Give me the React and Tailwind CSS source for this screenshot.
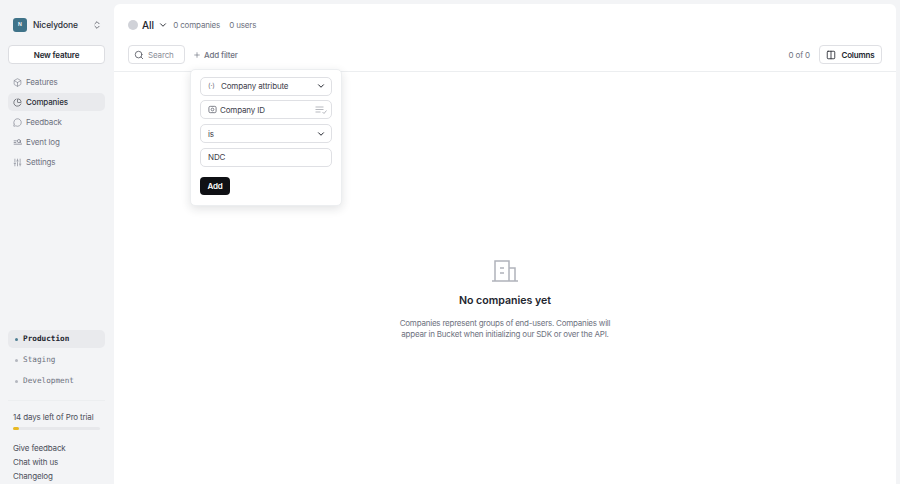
import { ChevronDown, ChevronsUpDown, Search, Plus, Columns2, Box, MessageCircle, SlidersVertical, ChartPie } from 'lucide-react';

const FONT = "font-['Inter','Liberation_Sans',sans-serif]";
const MONO = "font-['DejaVu_Sans_Mono','Liberation_Mono',monospace]";

function EventLogIcon({ className }) {
  return (
    <svg className={className} viewBox="0 0 16 16" fill="none" stroke="currentColor" strokeWidth="1.2" strokeLinecap="round">
      <path d="M2 5h4M2 8h3M2 11h13" />
      <circle cx="10.5" cy="5.5" r="2.8" />
      <path d="M12.5 7.5 14.5 9" />
    </svg>
  );
}

function NavItem({ icon: Icon, label, active }) {
  return (
    <div className={`flex h-[18px] items-center gap-[4px] rounded-[5px] pl-[5px] text-[8px] tracking-[-0.15px] ${active ? 'bg-[#e9eaed] font-medium text-[#2b2e38]' : 'text-[#6e7280]'}`}>
      <Icon className="h-[9px] w-[9px]" strokeWidth={1.5} />
      <span>{label}</span>
    </div>
  );
}

function EnvItem({ label, active }) {
  return (
    <div className={`flex h-[18px] items-center gap-[5px] rounded-[5px] pl-[7px] text-[7.7px] ${MONO} ${active ? 'bg-[#e9eaed] font-bold text-[#22252e]' : 'text-[#6e7280]'}`}>
      <span className={`h-[3px] w-[3px] rounded-full ${active ? 'bg-[#4f7f93]' : 'bg-[#b4b7bf]'}`} />
      <span>{label}</span>
    </div>
  );
}

function Field({ children, right }) {
  return (
    <div className="flex h-[19px] w-[132px] items-center justify-between rounded-[5px] border border-[#dfe0e4] bg-white pl-[7px] pr-[4px] text-[8px] tracking-[-0.15px] text-[#3d404a]">
      <div className="flex items-center gap-[4px]">{children}</div>
      {right}
    </div>
  );
}

const chevron = <ChevronDown className="mr-[1px] h-[10px] w-[10px] text-[#22252e]" strokeWidth={2.4} />;

export default function App() {
  return (
    <div className={`flex h-[484px] w-[900px] overflow-hidden bg-[#f3f4f6] ${FONT}`}>
      {/* SIDEBAR */}
      <aside className="flex w-[114px] shrink-0 flex-col pl-[8px] pr-[9px]">
        <div className="mt-[18px] flex items-center pl-[5px] pr-[3px]">
          <div className="flex h-[14px] w-[14px] items-center justify-center rounded-[3px] bg-[#3f7389] text-[5px] font-semibold text-white">N</div>
          <span className="ml-[6px] flex-1 text-[8.5px] font-medium tracking-[-0.1px] text-[#2b2e38]">Nicelydone</span>
          <ChevronsUpDown className="h-[10px] w-[10px] text-[#555862]" />
        </div>
        <div className="mt-[13px] flex h-[19px] items-center justify-center rounded-[4px] border border-[#dcdde1] bg-white text-[8px] font-semibold tracking-[-0.15px] text-[#22252e]">New feature</div>

        <nav className="mt-[9px] flex flex-col gap-[2px]">
          <NavItem icon={Box} label="Features" />
          <NavItem icon={ChartPie} label="Companies" active />
          <NavItem icon={MessageCircle} label="Feedback" />
          <NavItem icon={EventLogIcon} label="Event log" />
          <NavItem icon={SlidersVertical} label="Settings" />
        </nav>

        <div className="mt-auto flex flex-col gap-[3px]">
          <EnvItem label="Production" active />
          <EnvItem label="Staging" />
          <EnvItem label="Development" />
        </div>

        <div className="mt-[10px] border-t border-[#eceef0] pl-[5px] pb-[2px] pt-[10px] text-[8px] tracking-[-0.15px] text-[#4c4f5a]">
          <div className="leading-[12px]">14 days left of Pro trial</div>
          <div className="mt-[4px] mr-[5px] h-[3px] rounded-full bg-[#e7e8eb]">
            <div className="h-[3px] w-[6px] rounded-full bg-[#e8b923]" />
          </div>
          <div className="mt-[12px] flex flex-col gap-[2px] leading-[12px]">
            <span>Give feedback</span>
            <span>Chat with us</span>
            <span>Changelog</span>
          </div>
        </div>
      </aside>

      {/* MAIN */}
      <main className="relative mt-[4px] mr-[4px] flex flex-1 flex-col rounded-t-[6px] bg-white">
        <div className="flex items-center pl-[14px] pt-[15px]">
          <span className="h-[10px] w-[10px] rounded-full bg-[#d0d2d8]" />
          <span className="ml-[4px] text-[10px] leading-[12px] font-medium text-[#22252e]">All</span>
          <ChevronDown className="ml-[4px] h-[10px] w-[10px] text-[#22252e]" strokeWidth={2.2} />
          <span className="ml-[5px] text-[8px] tracking-[-0.15px] text-[#6e7280]">0 companies</span>
          <span className="ml-[9px] text-[8px] tracking-[-0.15px] text-[#6e7280]">0 users</span>
        </div>

        <div className="mt-[14px] flex h-[27px] items-start border-b border-[#eceef0] pl-[14px] pr-[14px] text-[8px] tracking-[-0.15px]">
          <div className="flex h-[19px] w-[57px] items-center gap-[4px] rounded-[4px] border border-[#dfe0e4] pl-[5px] text-[#8a8d97]">
            <Search className="h-[10px] w-[10px] text-[#555862]" />
            <span>Search</span>
          </div>
          <div className="ml-[8px] flex h-[19px] items-center gap-[3px] font-medium text-[#6e7280]">
            <Plus className="h-[8px] w-[8px]" />
            <span>Add filter</span>
          </div>
          <span className="ml-auto flex h-[19px] items-center text-[#6e7280]">0 of 0</span>
          <div className="ml-[9px] flex h-[19px] w-[63px] items-center justify-center gap-[5px] rounded-[4px] border border-[#dfe0e4] font-semibold text-[#22252e]">
            <Columns2 className="h-[10px] w-[10px]" />
            <span>Columns</span>
          </div>
        </div>

        {/* Filter popover */}
        <div className="absolute left-[76px] top-[65px] flex w-[152px] flex-col gap-[4.75px] rounded-[5px] border border-[#eceef0] bg-white px-[9px] pb-[10px] pt-[6.5px] shadow-[0_3px_10px_rgba(30,35,50,0.13)]">
          <Field right={chevron}>
            <span className="w-[9px] text-[7px] text-[#70737d]">{'(·)'}</span>
            <span>Company attribute</span>
          </Field>
          <Field right={
            <svg className="h-[10px] w-[12px] text-[#a4a7af]" viewBox="0 0 12 10" fill="none" stroke="currentColor" strokeWidth="0.8">
              <path d="M0.5 2h8M0.5 4.5h8M0.5 7h5M7.5 7l1.5 1.5 2.5-3" />
            </svg>
          }>
            <svg className="h-[9px] w-[9px] text-[#70737d]" viewBox="0 0 10 10" fill="none" stroke="currentColor" strokeWidth="1">
              <rect x="1" y="1.5" width="8" height="7" rx="1.5" />
              <circle cx="5" cy="5" r="1.5" />
            </svg>
            <span className="-ml-[1px]">Company ID</span>
          </Field>
          <Field right={chevron}><span>is</span></Field>
          <Field><span>NDC</span></Field>
          <div className="mt-[5px] flex h-[18.5px] w-[30px] items-center justify-center rounded-[4px] bg-[#0f1014] text-[8px] font-semibold tracking-[-0.15px] text-white">Add</div>
        </div>

        {/* Empty state */}
        <div className="flex flex-col items-center pt-[187px]">
          <svg className="h-[24px] w-[28px] text-[#b0b3bb]" viewBox="0 0 28 24" fill="none" stroke="currentColor" strokeWidth="1.5">
            <path d="M1 22h26M4 22V2h14v20M18 9h6v13" />
            <path d="M9 9h4M9 14h4" />
          </svg>
          <h2 className="mt-[10px] text-[10.6px] leading-[16px] font-semibold text-[#22252e]">No companies yet</h2>
          <p className="mt-[8.5px] w-[220px] text-center text-[8px] leading-[11.5px] tracking-[-0.22px] text-[#6e7280]">
            Companies represent groups of end-users. Companies will appear in Bucket when initializing our SDK or over the API.
          </p>
        </div>
      </main>
    </div>
  );
}
